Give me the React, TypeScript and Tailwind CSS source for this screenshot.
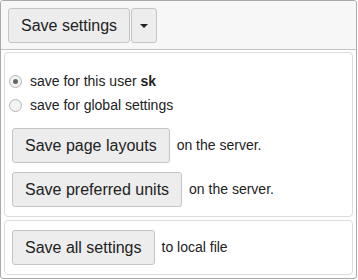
const btn =
  "h-[35px] px-[12px] rounded-[3px] border border-[#c5c5c5] bg-[#ededed] text-[16px] text-[#222] leading-none whitespace-nowrap";

function Radio({ checked }: { checked?: boolean }) {
  return (
    <span className="w-[13px] h-[13px] rounded-full border border-[#b5b5b5] bg-[#f3f3f3] flex items-center justify-center">
      {checked && <span className="w-[5px] h-[5px] rounded-full bg-[#666]" />}
    </span>
  );
}

export default function App() {
  return (
    <div className="w-[358px] h-[280px] bg-white" style={{ fontFamily: '"Liberation Sans", Arial, sans-serif' }}>
      <div className="w-[357px] h-[279px] border border-[#a9a9a9] rounded-[3px] flex flex-col">
        <div className="bg-[#f7f7f7] border-b border-[#c5c5c5] px-[7px] pt-[7px] pb-[6px] flex rounded-t-[3px]">
          <button className={btn + " w-[122px]"}>Save settings</button>
          <button className="h-[35px] w-[26px] ml-px rounded-[3px] border border-[#c5c5c5] bg-[#ededed] flex items-center justify-center">
            <span className="w-0 h-0 border-l-[4px] border-r-[4px] border-t-[4px] border-l-transparent border-r-transparent border-t-[#222]" />
          </button>
        </div>
        <div className="flex flex-col gap-[3px] px-[3px] pt-[2px]">
          <div className="border border-[#dcdcdc] rounded-[4px] h-[165px] pl-[4px] pt-[16px] text-[14px] text-[#222]">
            <label className="flex items-center gap-[8px] h-[24px]">
              <Radio checked />
              <span>
                save for this user <b>sk</b>
              </span>
            </label>
            <label className="flex items-center gap-[8px] h-[24px]">
              <Radio />
              <span>save for global settings</span>
            </label>
            <div className="flex items-center gap-[7px] mt-[11px] ml-[3px]">
              <button className={btn}>Save page layouts</button>
              <span>on the server.</span>
            </div>
            <div className="flex items-center gap-[7px] mt-[9px] ml-[3px]">
              <button className={btn}>Save preferred units</button>
              <span>on the server.</span>
            </div>
          </div>
          <div className="border border-[#dcdcdc] rounded-[4px] h-[55px] pl-[4px] pt-[9px] text-[14px] text-[#222]">
            <div className="flex items-center gap-[7px] ml-[3px]">
              <button className={btn}>Save all settings</button>
              <span>to local file</span>
            </div>
          </div>
        </div>
      </div>
    </div>
  );
}
